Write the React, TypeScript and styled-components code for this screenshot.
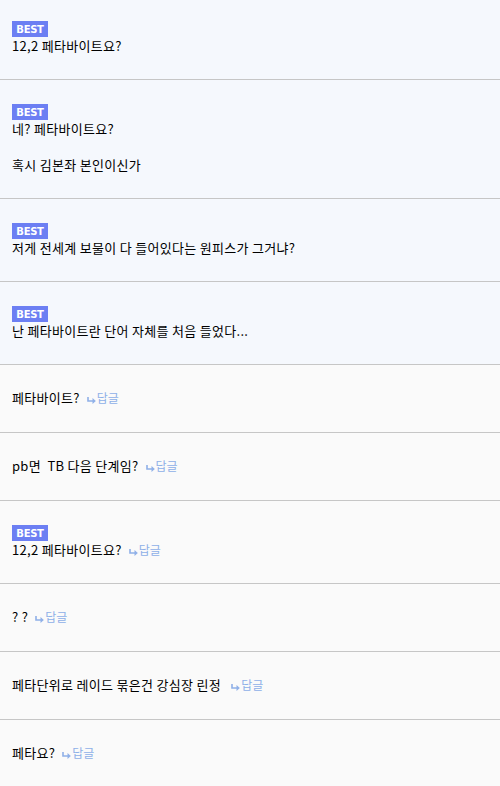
import React from 'react';
import styled, { createGlobalStyle } from 'styled-components';

const GlobalStyle = createGlobalStyle`
  html, body {
    margin: 0;
    padding: 0;
    background: #fafafa;
  }
  body {
    font-family: "Noto Sans CJK KR", "Noto Sans", sans-serif;
    color: #000;
    overflow: hidden;
  }
`;

interface CommentData {
    text: string;
    best?: boolean;
    tinted?: boolean;
    reply?: boolean;
}

const comments: CommentData[] = [
    { text: '12,2 페타바이트요?', best: true, tinted: true },
    { text: '네? 페타바이트요?\n\n혹시 김본좌 본인이신가', best: true, tinted: true },
    { text: '저게 전세계 보물이 다 들어있다는 원피스가 그거냐?', best: true, tinted: true },
    { text: '난 페타바이트란 단어 자체를 처음 들었다...', best: true, tinted: true },
    { text: '페타바이트?', reply: true },
    { text: 'pb면  TB 다음 단계임?', reply: true },
    { text: '12,2 페타바이트요?', best: true, reply: true },
    { text: '? ?', reply: true },
    { text: '페타단위로 레이드 묶은건 강심장 린정 ', reply: true },
    { text: '페타요?', reply: true },
];

const List = styled.ul`
  list-style: none;
  margin: -3px 0 0;
  padding: 0;
  width: 500px;
`;

const Row = styled.li<{ $tinted?: boolean; $best?: boolean }>`
  display: flex;
  flex-direction: column;
  align-items: flex-start;
  padding: 24px 12px ${props => (props.$best ? '24px' : '25px')};
  background: ${props => (props.$tinted ? '#f5f8fd' : '#fafafa')};
  border-bottom: 1px solid #c6c6c6;
`;

const Badge = styled.span`
  display: inline-flex;
  align-items: center;
  justify-content: center;
  width: 36px;
  height: 16px;
  background: #6c7ff3;
  color: #fff;
  font-family: "DejaVu Sans", "Liberation Sans", sans-serif;
  font-weight: bold;
  font-size: 10px;
  letter-spacing: -0.3px;
`;

const Body = styled.p<{ $lines: number }>`
  margin: 0;
  font-size: 13px;
  line-height: 18px;
  height: ${props => props.$lines * 18}px;
  letter-spacing: 0.3px;
  white-space: pre-wrap;
  color: #000;
`;

const Reply = styled.a`
  display: inline-block;
  margin-left: 7px;
  color: #8fb0e8;
  font-size: 12px;
  line-height: 18px;
  letter-spacing: 0;
  text-decoration: none;
  vertical-align: top;

  svg {
    display: inline-block;
    vertical-align: -1px;
    margin-right: 1px;
  }
`;

const ReplyArrow = () => (
    <svg width="9" height="8" viewBox="0 0 9 8" fill="none">
        <path d="M1 1v4h5" stroke="#8fb0e8" strokeWidth="1.6" />
        <path d="M5.5 2L8.8 5L5.5 8z" fill="#8fb0e8" />
    </svg>
);

const App: React.FC = () => {
    return (
        <>
            <GlobalStyle />
            <List>
                {comments.map((c, i) => (
                    <Row key={i} $tinted={c.tinted} $best={c.best}>
                        {c.best && <Badge>BEST</Badge>}
                        <Body $lines={c.text.split('\n').length}>
                            {c.text}
                            {c.reply && (
                                <Reply href="#">
                                    <ReplyArrow />
                                    답글
                                </Reply>
                            )}
                        </Body>
                    </Row>
                ))}
            </List>
        </>
    );
};

export default App;
